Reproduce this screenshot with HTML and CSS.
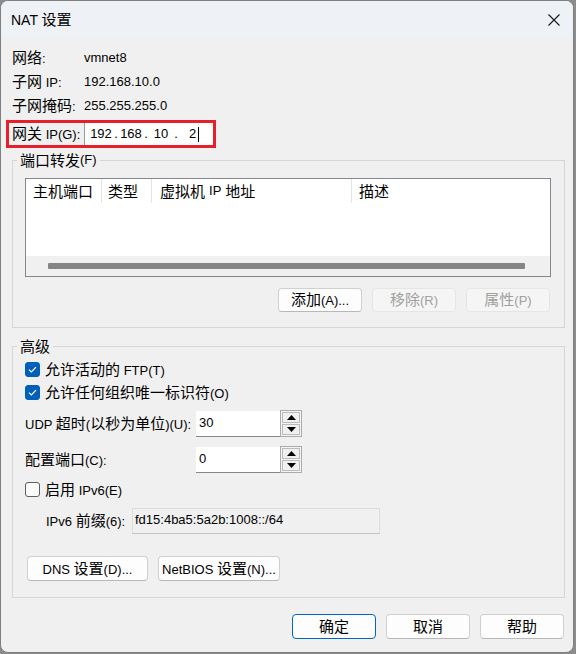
FILE: index.html
```html
<!DOCTYPE html>
<html lang="zh-CN">
<head>
    <meta charset="UTF-8">
    <title>NAT 设置</title>
    <link rel="stylesheet" href="styles.css">
</head>
<body>
    <div class="window">
        <div class="titlebar">
            <span class="title">NAT <span class="zh">设置</span></span>
            <svg class="close" width="12" height="12" viewBox="0 0 12 12">
                <path d="M0.5 0.5 L11.5 11.5 M11.5 0.5 L0.5 11.5" stroke="#1a1a1a" stroke-width="1.1"/>
            </svg>
        </div>

        <div class="content">
            <!-- network info -->
            <div class="info-row"><span class="label"><span class="zh">网络</span>:</span><span>vmnet8</span></div>
            <div class="info-row"><span class="label"><span class="zh">子网</span> IP:</span><span>192.168.10.0</span></div>
            <div class="info-row"><span class="label"><span class="zh">子网掩码</span>:</span><span>255.255.255.0</span></div>

            <div class="gateway">
                <span class="label"><span class="zh">网关</span> IP(G):</span>
                <div class="ip-box">
                    <span class="ip-part">192</span><span class="ip-dot">.</span><span class="ip-part">168</span><span class="ip-dot">.</span><span class="ip-part">10</span><span class="ip-dot">.</span><span class="ip-part last">2<span class="caret"></span></span>
                </div>
            </div>

            <!-- port forwarding -->
            <fieldset class="group forward">
                <legend><span class="zh">端口转发</span>(F)</legend>
                <div class="list">
                    <div class="list-head">
                        <span class="col col-port"><span class="zh">主机端口</span></span>
                        <span class="col col-type"><span class="zh">类型</span></span>
                        <span class="col col-ip"><span class="zh">虚拟机</span> IP <span class="zh">地址</span></span>
                        <span class="col col-desc"><span class="zh">描述</span></span>
                    </div>
                    <div class="list-body"></div>
                    <div class="hscroll"><div class="thumb"></div></div>
                </div>
                <div class="btn-row">
                    <button class="btn"><span class="zh">添加</span>(A)...</button>
                    <button class="btn" disabled><span class="zh">移除</span>(R)</button>
                    <button class="btn" disabled><span class="zh">属性</span>(P)</button>
                </div>
            </fieldset>

            <!-- advanced -->
            <fieldset class="group advanced">
                <legend><span class="zh">高级</span></legend>
                <div class="check-row">
                    <span class="check on"><svg width="15" height="15" viewBox="0 0 15 15"><path d="M4 7.6 L6.4 10 L11 5.2" fill="none" stroke="#fff" stroke-width="1.2"/></svg></span>
                    <span><span class="zh">允许活动的</span> FTP(T)</span>
                </div>
                <div class="check-row">
                    <span class="check on"><svg width="15" height="15" viewBox="0 0 15 15"><path d="M4 7.6 L6.4 10 L11 5.2" fill="none" stroke="#fff" stroke-width="1.2"/></svg></span>
                    <span><span class="zh">允许任何组织唯一标识符</span>(O)</span>
                </div>

                <div class="field-row udp">
                    <span class="field-label">UDP <span class="zh">超时</span>(<span class="zh">以秒为单位</span>)(U):</span>
                    <div class="num-input">30</div>
                    <div class="spin">
                        <span class="spin-btn"><svg width="9" height="5" viewBox="0 0 9 5"><path d="M0 5 L4.5 0 L9 5Z"/></svg></span>
                        <span class="spin-btn"><svg width="9" height="5" viewBox="0 0 9 5"><path d="M0 0 L4.5 5 L9 0Z"/></svg></span>
                    </div>
                </div>
                <div class="field-row port">
                    <span class="field-label"><span class="zh">配置端口</span>(C):</span>
                    <div class="num-input">0</div>
                    <div class="spin">
                        <span class="spin-btn"><svg width="9" height="5" viewBox="0 0 9 5"><path d="M0 5 L4.5 0 L9 5Z"/></svg></span>
                        <span class="spin-btn"><svg width="9" height="5" viewBox="0 0 9 5"><path d="M0 0 L4.5 5 L9 0Z"/></svg></span>
                    </div>
                </div>

                <div class="check-row ipv6">
                    <span class="check"></span>
                    <span><span class="zh">启用</span> IPv6(E)</span>
                </div>
                <div class="prefix-row">
                    <span class="prefix-label">IPv6 <span class="zh">前缀</span>(6):</span>
                    <div class="readonly">fd15:4ba5:5a2b:1008::/64</div>
                </div>

                <div class="settings-row">
                    <button class="btn wide">DNS <span class="zh">设置</span>(D)...</button>
                    <button class="btn wide">NetBIOS <span class="zh">设置</span>(N)...</button>
                </div>
            </fieldset>

            <div class="footer">
                <button class="btn default"><span class="zh">确定</span></button>
                <button class="btn"><span class="zh">取消</span></button>
                <button class="btn"><span class="zh">帮助</span></button>
            </div>
        </div>
    </div>
</body>
</html>
```

FILE: styles.css
```css
html, body {
    margin: 0;
    padding: 0;
    background-color: #8c8c8c;
}
body {
    font-family: "Liberation Sans", "Noto Sans CJK SC", sans-serif;
    font-size: 13px;
    line-height: 18px;
    color: #000;
}
.zh {
    font-family: "Noto Sans CJK SC", sans-serif;
    font-size: 15px;
}
.window {
    width: 574px;
    height: 653px;
    box-sizing: border-box;
    border: 1px solid #7f7f7f;
    border-radius: 8px;
    background-color: #f0f0f0;
    overflow: hidden;
}
.titlebar {
    height: 36px;
    background-color: #eef2f7;
    display: flex;
    align-items: center;
    justify-content: space-between;
    padding: 0 13px 0 10px;
}
.title {
    font-size: 14px;
}
.close {
    display: block;
    margin-top: 1px;
}
.content {
    padding: 9px 8px 0 11px;
}
.info-row {
    display: flex;
    align-items: center;
    height: 24px;
}
.label {
    width: 72px;
    flex-shrink: 0;
}

/* gateway with red highlight */
.gateway {
    display: flex;
    align-items: center;
    width: 210px;
    height: 28px;
    box-sizing: border-box;
    margin: 2px 0 0 -6px;
    padding-left: 3px;
    border: 3px solid #e81f2b;
}
.ip-box {
    width: 129px;
    height: 22px;
    box-sizing: border-box;
    background-color: #fff;
    border-left: 1px solid #9a9a9a;
    display: flex;
    align-items: center;
    padding-left: 4px;
    font-size: 13px;
}
.ip-part {
    display: inline-block;
    width: 24px;
    text-align: center;
}
.ip-part.last {
    display: flex;
    align-items: center;
    justify-content: center;
    gap: 2px;
    padding-left: 3px;
}
.ip-dot {
    display: inline-block;
    width: 6px;
    text-align: center;
}
.caret {
    display: inline-block;
    width: 1px;
    height: 15px;
    background-color: #000;
}

/* group boxes */
.group {
    margin: 3px 0 0;
    border: 1px solid #d6d6d6;
    padding: 9px 13px 15px 12px;
}
.group legend {
    height: 18px;
    display: flex;
    align-items: center;
    margin-left: -8px;
    padding: 0 3px;
    line-height: 18px;
}
.list {
    height: 99px;
    box-sizing: border-box;
    border: 1px solid #828790;
    background-color: #fff;
    display: flex;
    flex-direction: column;
}
.list-head {
    display: flex;
    height: 24px;
}
.col {
    box-sizing: border-box;
    border-right: 1px solid #e5e5e5;
    padding-left: 7px;
    display: flex;
    align-items: center;
    gap: 4px;
    white-space: nowrap;
}
.col-port { width: 76px; }
.col-type { width: 50px; padding-left: 6px; }
.col-ip { width: 200px; padding-left: 8px; }
.col-desc { border-right: none; }
.list-body {
    flex: 1;
}
.hscroll {
    height: 20px;
    background-color: #f0f0f0;
    padding: 7px 25px 0 22px;
    box-sizing: border-box;
}
.thumb {
    height: 6px;
    background-color: #858585;
    border-radius: 1px;
}
.btn-row {
    display: flex;
    justify-content: flex-end;
    gap: 10px;
    margin-top: 11px;
    padding-right: 1px;
}
.btn {
    width: 84px;
    height: 24px;
    box-sizing: border-box;
    padding: 0;
    font-family: inherit;
    font-size: 13px;
    line-height: 18px;
    color: #000;
    background-color: #fdfdfd;
    border: 1px solid #d0d0d0;
    border-bottom-color: #b8b8b8;
    border-radius: 4px;
}
.btn:disabled {
    color: #a0a0a0;
    background-color: #f5f5f5;
    border-color: #e5e5e5;
}

/* advanced group */
.advanced {
    margin-top: 9px;
    padding: 3px 13px 16px 12px;
}
.check-row {
    display: flex;
    align-items: center;
    gap: 5px;
    height: 23px;
}
.check {
    width: 15px;
    height: 15px;
    box-sizing: border-box;
    border: 1px solid #5f5f5f;
    border-radius: 3px;
    background-color: #fbfbfb;
}
.check.on {
    background-color: #005fb8;
    border-color: #005fb8;
}
.check svg {
    display: block;
    margin: -1px;
}
.field-row {
    display: flex;
    align-items: center;
    height: 27px;
}
.field-row.udp { margin-top: 6px; }
.field-row.port { margin-top: 9px; }
.field-label {
    width: 171px;
    flex-shrink: 0;
}
.num-input {
    width: 84px;
    height: 26px;
    box-sizing: border-box;
    background-color: #fff;
    border-bottom: 1px solid #878787;
    padding: 3px 0 0 3px;
}
.spin {
    width: 22px;
    height: 27px;
    box-sizing: border-box;
    border: 1px solid #ababab;
    padding: 1px;
    display: flex;
    flex-direction: column;
    gap: 1px;
    background-color: #f4f4f4;
}
.spin-btn {
    flex: 1;
    border: 1px solid #bcbcbc;
    background-color: #f0f0f0;
    display: flex;
    align-items: center;
    justify-content: center;
}
.spin-btn svg {
    display: block;
}
.check-row.ipv6 {
    margin-top: 5px;
}
.prefix-row {
    display: flex;
    align-items: center;
    height: 26px;
    margin-top: 7px;
    padding-left: 21px;
}
.prefix-label {
    width: 86px;
    flex-shrink: 0;
}
.readonly {
    width: 248px;
    height: 26px;
    box-sizing: border-box;
    border: 1px solid #dcdcdc;
    border-bottom-color: #c4c4c4;
    background-color: #f0f0f0;
    padding: 2px 0 0 2px;
}
.settings-row {
    display: flex;
    gap: 10px;
    margin-top: 22px;
    padding-left: 2px;
}
.btn.wide {
    width: 121px;
    height: 25px;
}
.btn.wide + .btn.wide {
    width: 122px;
}
.footer {
    display: flex;
    justify-content: flex-end;
    gap: 10px;
    margin-top: 16px;
    padding-right: 1px;
}
.footer .btn {
    height: 25px;
}
.btn.default {
    border: 1px solid #0067c0;
}
```
